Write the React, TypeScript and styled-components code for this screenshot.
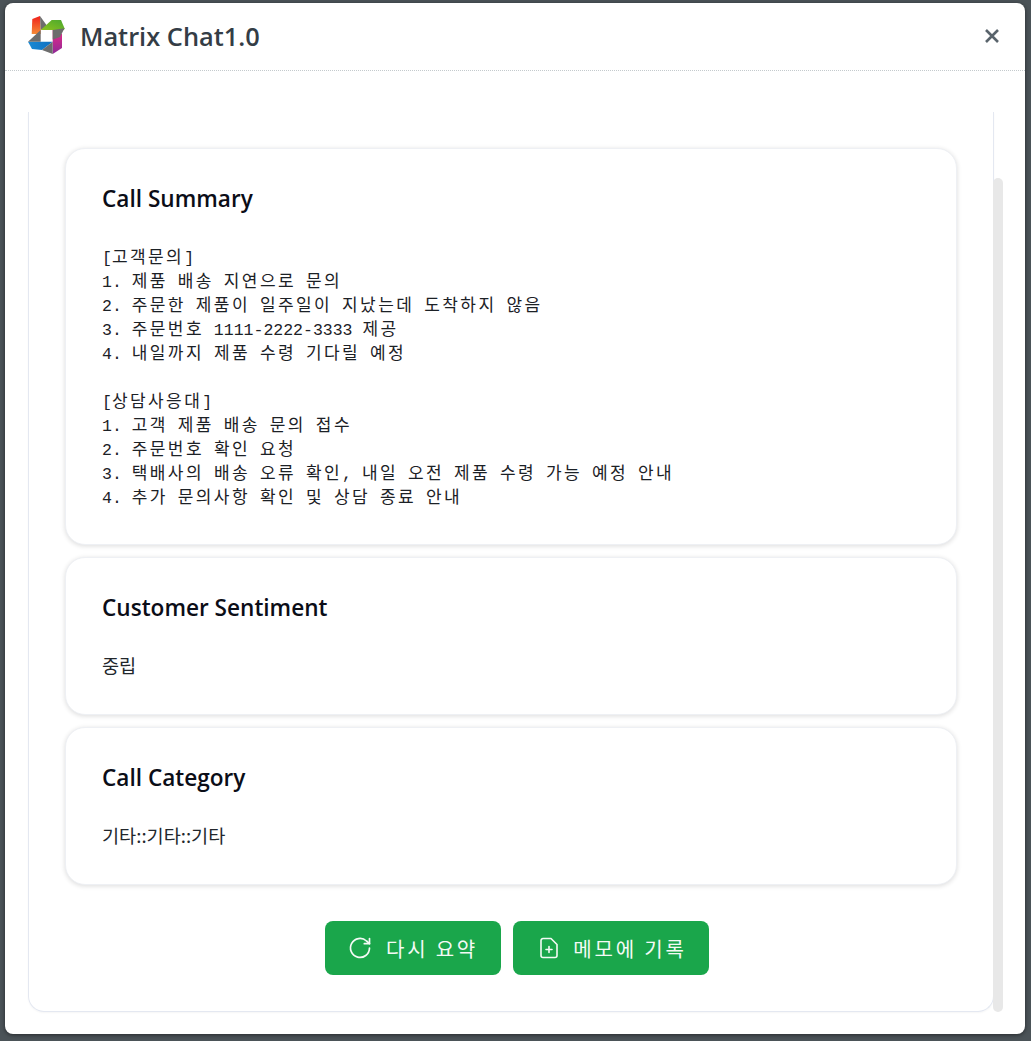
import { ReactNode } from "react";
import styled, { createGlobalStyle } from "styled-components";

const GlobalStyle = createGlobalStyle`
  html, body {
    margin: 0;
    height: 100%;
    background: #4b5358;
  }
  * {
    box-sizing: border-box;
  }
`;

const Backdrop = styled.div`
  width: 1031px;
  height: 1041px;
  padding: 3px 6px 7px 5px;
  overflow: hidden;
`;

const Modal = styled.div`
  height: 100%;
  display: flex;
  flex-direction: column;
  background: #fff;
  border-radius: 8px;
  box-shadow: 0 1px 4px rgba(0, 0, 0, 0.5);
  font-family: "Noto Sans CJK KR", "Noto Sans", sans-serif;
`;

const Header = styled.div`
  height: 68px;
  flex: none;
  display: flex;
  align-items: center;
  padding: 0 25px 2px 23px;
  border-bottom: 1px dotted #c4cacd;
`;

const Title = styled.h1`
  margin: 0 0 0 14px;
  font-family: "Open Sans", sans-serif;
  font-size: 25.4px;
  font-weight: 600;
  color: #343d46;
`;

const CloseButton = styled.button`
  margin-left: auto;
  padding: 0;
  border: 0;
  background: none;
  display: flex;
  color: #5a646c;
`;

const Body = styled.div`
  flex: 1;
  min-height: 0;
  display: flex;
  padding: 41px 22px 22px 23px;
`;

const Panel = styled.div`
  flex: 1;
  display: flex;
  flex-direction: column;
  gap: 12px;
  padding: 36px;
  border: 1px solid #e4e8f1;
  border-top: 0;
  border-radius: 0 0 16px 16px;
  box-shadow: 0 1px 2px rgba(0, 0, 0, 0.04);
`;

const ScrollTrack = styled.div`
  width: 10px;
  flex: none;
  margin-left: -1px;
  padding-top: 66px;
`;

const ScrollThumb = styled.div`
  height: 100%;
  background: #e8e8e8;
  border-radius: 5px;
`;

const Card = styled.section`
  height: ${({ $height }: { $height: number }) => $height}px;
  flex: none;
  padding: 35px 36px 0;
  background: #fff;
  border: 1px solid #eef0f4;
  border-radius: 20px;
  box-shadow: 0 1px 5px rgba(0, 0, 0, 0.14);
`;

const CardTitle = styled.h2`
  margin: 0 0 30px;
  height: 30px;
  line-height: 30px;
  font-family: "Open Sans", sans-serif;
  font-size: 22.6px;
  font-weight: 600;
  color: #0b0d17;
`;

const Summary = styled.div`
  font-family: "Liberation Mono", monospace;
  font-size: 16.5px;
  line-height: 24px;
  color: #1c2126;
  white-space: pre;
`;

const Line = styled.div`
  height: 24px;
`;

const Hangul = styled.span`
  font-family: "Noto Sans CJK KR", sans-serif;
  font-size: 17px;
  letter-spacing: 2.42px;
`;

const Plain = styled.div`
  font-size: 18.6px;
  line-height: 24px;
  color: #22272c;
`;

const Actions = styled.div`
  margin-top: 24px;
  padding-left: 12px;
  display: flex;
  justify-content: center;
  gap: 12px;
`;

const ActionButton = styled.button`
  width: ${({ $width }: { $width: number }) => $width}px;
  height: 54px;
  display: flex;
  align-items: center;
  justify-content: center;
  gap: 14px;
  border: 0;
  border-radius: 8px;
  background: #1aa64b;
  color: #f4faf5;
  font-family: "Noto Sans CJK KR", sans-serif;
  font-size: 20px;
  letter-spacing: 2.8px;
`;

const summaryLines = [
  "[고객문의]",
  "1. 제품 배송 지연으로 문의",
  "2. 주문한 제품이 일주일이 지났는데 도착하지 않음",
  "3. 주문번호 1111-2222-3333 제공",
  "4. 내일까지 제품 수령 기다릴 예정",
  "",
  "[상담사응대]",
  "1. 고객 제품 배송 문의 접수",
  "2. 주문번호 확인 요청",
  "3. 택배사의 배송 오류 확인, 내일 오전 제품 수령 가능 예정 안내",
  "4. 추가 문의사항 확인 및 상담 종료 안내",
];

// hangul and latin have different advances in the original font
function splitRuns(text: string): ReactNode[] {
  return text.split(/([가-힣]+)/).map((run, i) =>
    /[가-힣]/.test(run) ? <Hangul key={i}>{run}</Hangul> : run
  );
}

function Logo() {
  return (
    <svg width="38" height="40" viewBox="0 0 38 40">
      <defs>
        <linearGradient id="lgRed" x1="0" y1="0" x2="0" y2="1">
          <stop offset="0" stopColor="#f0201c" />
          <stop offset="1" stopColor="#f58a35" />
        </linearGradient>
        <linearGradient id="lgGreen" x1="0" y1="1" x2="1" y2="0">
          <stop offset="0" stopColor="#8dc21f" />
          <stop offset="1" stopColor="#4aa82e" />
        </linearGradient>
        <linearGradient id="lgPink" x1="0" y1="0" x2="0" y2="1">
          <stop offset="0" stopColor="#ea2a86" />
          <stop offset="1" stopColor="#8f2a98" />
        </linearGradient>
        <linearGradient id="lgBlue" x1="0" y1="0" x2="1" y2="0">
          <stop offset="0" stopColor="#1a8ad4" />
          <stop offset="1" stopColor="#0f6fc0" />
        </linearGradient>
      </defs>
      <polygon points="4.3,3 12,0 12.7,14 12.7,18 3.7,18" fill="url(#lgRed)" />
      <polygon points="12,0 19.7,10.7 12.7,14" fill="#6d6d6d" />
      <polygon points="12.7,14 23.7,4 33,4 36.5,12.3 36,14 12.7,14" fill="url(#lgGreen)" />
      <polygon points="24.7,14 34,18 34,32 24.7,38" fill="url(#lgPink)" />
      <polygon points="24.7,14 36.5,12.3 32,21 24.7,23.5" fill="#6d6d6d" />
      <polygon points="0,25.7 24.7,25.7 14,34 4,33" fill="url(#lgBlue)" />
      <polygon points="14,34 24.7,25.7 24.7,38" fill="#6d6d6d" />
      <polygon points="0,25.7 12.7,14 12.7,25.7" fill="#6d6d6d" />
    </svg>
  );
}

function CloseIcon() {
  return (
    <svg width="16" height="16" viewBox="0 0 16 16">
      <path d="M2 2l12 12M14 2L2 14" stroke="currentColor" strokeWidth="2.6" />
    </svg>
  );
}

function RefreshIcon() {
  return (
    <svg width="24" height="24" viewBox="0 0 24 24" fill="none" stroke="currentColor" strokeWidth="1.7" strokeLinecap="round" strokeLinejoin="round">
      <path d="M21.5 12a9.5 9.5 0 1 1-3-7l3 2.6" />
      <path d="M21.5 2.5v5.2h-5.2" />
    </svg>
  );
}

function MemoIcon() {
  return (
    <svg width="24" height="24" viewBox="-4 0 24 24" fill="none" stroke="currentColor" strokeWidth="1.6" strokeLinecap="round" strokeLinejoin="round">
      <path d="M4 2.5h8l6 6v11a2 2 0 0 1-2 2H4a2 2 0 0 1-2-2v-15a2 2 0 0 1 2-2z" />
      <path d="M10 10.5v6M7 13.5h6" />
    </svg>
  );
}

export default function App() {
  return (
    <Backdrop>
      <GlobalStyle />
      <Modal>
        <Header>
          <Logo />
          <Title>Matrix Chat1.0</Title>
          <CloseButton>
            <CloseIcon />
          </CloseButton>
        </Header>
        <Body>
          <Panel>
            <Card $height={397}>
              <CardTitle>Call Summary</CardTitle>
              <Summary>
                {summaryLines.map((line, i) => (
                  <Line key={i}>{splitRuns(line)}</Line>
                ))}
              </Summary>
            </Card>
            <Card $height={158}>
              <CardTitle>Customer Sentiment</CardTitle>
              <Plain>중립</Plain>
            </Card>
            <Card $height={158}>
              <CardTitle>Call Category</CardTitle>
              <Plain>기타::기타::기타</Plain>
            </Card>
            <Actions>
              <ActionButton $width={176}>
                <RefreshIcon />
                다시 요약
              </ActionButton>
              <ActionButton $width={196}>
                <MemoIcon />
                메모에 기록
              </ActionButton>
            </Actions>
          </Panel>
          <ScrollTrack>
            <ScrollThumb />
          </ScrollTrack>
        </Body>
      </Modal>
    </Backdrop>
  );
}
